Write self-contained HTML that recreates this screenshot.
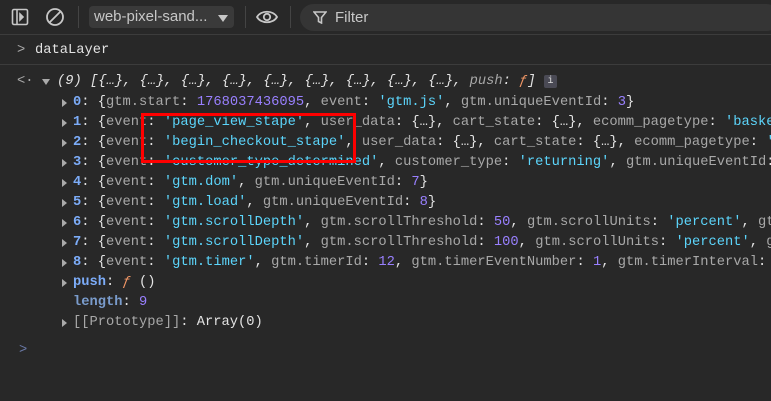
<!DOCTYPE html><html><head><style>
body{margin:0;width:771px;height:401px;background:#282828;overflow:hidden;font-family:"Liberation Mono",monospace;font-size:13.75px;color:#e3e3e3;position:relative}
.tb{position:absolute;left:0;top:0;width:771px;height:34px;border-bottom:1px solid #3c3c3c;background:#282828;font-family:"Liberation Sans",sans-serif;overflow:hidden}
.l{position:absolute;white-space:pre;line-height:20px;right:0;overflow:hidden}
.k{color:#a8a8a8}.s{color:#5cd5fb}.n{color:#9980ff}.i{color:#7cacf8;font-weight:bold}
.tri{position:absolute;width:0;height:0;border-left:5px solid #aaa;border-top:4px solid transparent;border-bottom:4px solid transparent}
</style></head><body>
<div class="tb">
<svg style="position:absolute;left:11px;top:8px" width="18" height="18" viewBox="0 0 18 18" fill="none" stroke="#c7c7c7" stroke-width="1.6"><rect x="1.5" y="1.5" width="15" height="15" rx="1.5"/><line x1="6" y1="2" x2="6" y2="16"/><path d="M9 6l3 3-3 3z" fill="#c7c7c7"/></svg>
<svg style="position:absolute;left:45px;top:7px" width="20" height="20" viewBox="0 0 20 20" fill="none" stroke="#c7c7c7" stroke-width="1.8"><circle cx="10" cy="10" r="8"/><line x1="4.5" y1="15.5" x2="15.5" y2="4.5"/></svg>
<div style="position:absolute;left:78px;top:6px;width:1px;height:22px;background:#444"></div>
<div style="position:absolute;left:89px;top:6px;width:145px;height:22px;background:#3a3a3a;border-radius:4px;color:#c7c7c7;font-size:15px;line-height:22px;padding-left:5px;box-sizing:border-box">web-pixel-sand...<span style="position:absolute;right:6px;top:9px;border-top:7px solid #c7c7c7;border-left:5px solid transparent;border-right:5px solid transparent"></span></div>
<div style="position:absolute;left:245px;top:6px;width:1px;height:22px;background:#444"></div>
<svg style="position:absolute;left:255px;top:8px" width="24" height="18" viewBox="0 0 24 18" fill="none" stroke="#c7c7c7" stroke-width="1.8"><path d="M2 9C6 2 18 2 22 9C18 16 6 16 2 9Z"/><circle cx="12" cy="9" r="3.2"/></svg>
<div style="position:absolute;left:290px;top:6px;width:1px;height:22px;background:#444"></div>
<div style="position:absolute;left:300px;top:4px;width:480px;height:27px;background:#353535;border-radius:14px;color:#c7c7c7;font-size:15px;line-height:27px;padding-left:35px;box-sizing:border-box">Filter</div>
<svg style="position:absolute;left:313px;top:11px" width="14" height="13" viewBox="0 0 14 13" fill="none" stroke="#c7c7c7" stroke-width="1.6"><path d="M1 1h12L8.5 6.5V12L5.5 10.5V6.5Z"/></svg>
</div>
<div class="l" style="left:17px;top:41px;color:#aaa">&gt;</div>
<div class="l" style="left:35px;top:41px">dataLayer</div>
<div style="position:absolute;left:0;top:64px;width:771px;height:1px;background:#3c3c3c"></div>
<div class="l" style="left:17px;top:72px;color:#aaa">&lt;·</div>
<div style="position:absolute;left:42px;top:79px;border-top:6px solid #aaa;border-left:4px solid transparent;border-right:4px solid transparent"></div>
<div class="l" style="left:57px;top:72px;font-style:italic">(9) [{…}, {…}, {…}, {…}, {…}, {…}, {…}, {…}, {…}, <span class="k">push</span>: <span style="color:#f29766">ƒ</span>]</div>
<div style="position:absolute;left:544px;top:75px;width:13px;height:13px;background:#4a4a55;border-radius:2px;color:#ddd;font-size:10px;line-height:13px;text-align:center">i</div>
<div class="tri" style="left:62px;top:99px"></div><div class="l" style="left:73px;top:93px"><span class="i">0</span>: {<span class="k">gtm.start</span>: <span class="n">1768037436095</span>, <span class="k">event</span>: <span class="s">'gtm.js'</span>, <span class="k">gtm.uniqueEventId</span>: <span class="n">3</span>}</div>
<div class="tri" style="left:62px;top:119px"></div><div class="l" style="left:73px;top:113px"><span class="i">1</span>: {<span class="k">event</span>: <span class="s">'page_view_stape'</span>, <span class="k">user_data</span>: {…}, <span class="k">cart_state</span>: {…}, <span class="k">ecomm_pagetype</span>: <span class="s">'basket'</span></div>
<div class="tri" style="left:62px;top:139px"></div><div class="l" style="left:73px;top:133px"><span class="i">2</span>: {<span class="k">event</span>: <span class="s">'begin_checkout_stape'</span>, <span class="k">user_data</span>: {…}, <span class="k">cart_state</span>: {…}, <span class="k">ecomm_pagetype</span>: <span class="s">'basket'</span></div>
<div class="tri" style="left:62px;top:159px"></div><div class="l" style="left:73px;top:153px"><span class="i">3</span>: {<span class="k">event</span>: <span class="s">'customer_type_determined'</span>, <span class="k">customer_type</span>: <span class="s">'returning'</span>, <span class="k">gtm.uniqueEventId</span>: 6</div>
<div class="tri" style="left:62px;top:179px"></div><div class="l" style="left:73px;top:173px"><span class="i">4</span>: {<span class="k">event</span>: <span class="s">'gtm.dom'</span>, <span class="k">gtm.uniqueEventId</span>: <span class="n">7</span>}</div>
<div class="tri" style="left:62px;top:199px"></div><div class="l" style="left:73px;top:193px"><span class="i">5</span>: {<span class="k">event</span>: <span class="s">'gtm.load'</span>, <span class="k">gtm.uniqueEventId</span>: <span class="n">8</span>}</div>
<div class="tri" style="left:62px;top:219px"></div><div class="l" style="left:73px;top:213px"><span class="i">6</span>: {<span class="k">event</span>: <span class="s">'gtm.scrollDepth'</span>, <span class="k">gtm.scrollThreshold</span>: <span class="n">50</span>, <span class="k">gtm.scrollUnits</span>: <span class="s">'percent'</span>, <span class="k">gtm</span></div>
<div class="tri" style="left:62px;top:239px"></div><div class="l" style="left:73px;top:233px"><span class="i">7</span>: {<span class="k">event</span>: <span class="s">'gtm.scrollDepth'</span>, <span class="k">gtm.scrollThreshold</span>: <span class="n">100</span>, <span class="k">gtm.scrollUnits</span>: <span class="s">'percent'</span>, <span class="k">g</span></div>
<div class="tri" style="left:62px;top:259px"></div><div class="l" style="left:73px;top:253px"><span class="i">8</span>: {<span class="k">event</span>: <span class="s">'gtm.timer'</span>, <span class="k">gtm.timerId</span>: <span class="n">12</span>, <span class="k">gtm.timerEventNumber</span>: <span class="n">1</span>, <span class="k">gtm.timerInterval</span>: </div>
<div class="tri" style="left:62px;top:279px"></div><div class="l" style="left:73px;top:273px"><span class="i">push</span>: <span style="color:#f29766;font-style:italic">ƒ</span> ()</div>
<div class="l" style="left:73px;top:293px"><span class="i" style="color:#7a9ccc">length</span>: <span class="n">9</span></div>
<div class="tri" style="left:62px;top:319px"></div><div class="l" style="left:73px;top:313px"><span class="k">[[Prototype]]</span>: Array(0)</div>
<div class="l" style="left:19px;top:341px;color:#6b7aa8">&gt;</div>
<div style="position:absolute;left:141px;top:113px;width:209px;height:44px;border:3px solid #f00"></div>
</body></html>
